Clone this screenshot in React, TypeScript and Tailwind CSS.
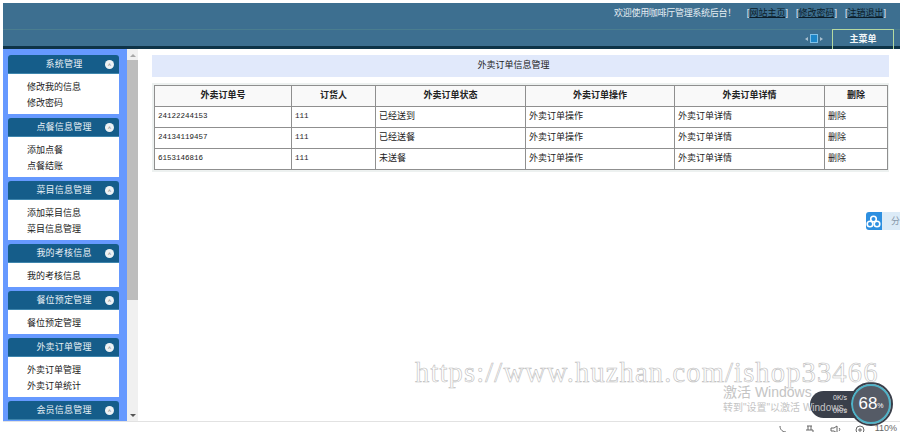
const menus = [
  { title: "系统管理", items: ["修改我的信息", "修改密码"] },
  { title: "点餐信息管理", items: ["添加点餐", "点餐结账"] },
  { title: "菜目信息管理", items: ["添加菜目信息", "菜目信息管理"] },
  { title: "我的考核信息", items: ["我的考核信息"] },
  { title: "餐位预定管理", items: ["餐位预定管理"] },
  { title: "外卖订单管理", items: ["外卖订单管理", "外卖订单统计"] },
  { title: "会员信息管理", items: [] as string[] },
];

const orders = [
  { no: "24122244153", user: "111", status: "已经送到" },
  { no: "24134119457", user: "111", status: "已经送餐" },
  { no: "6153146816", user: "111", status: "未送餐" },
];

const heads = ["外卖订单号", "订货人", "外卖订单状态", "外卖订单操作", "外卖订单详情", "删除"];
const widths = ["w-[137px]", "w-[84px]", "w-[150px]", "w-[149px]", "w-[150px]", "w-[63px]"];

const MenuGroup = ({ title, items }: { title: string; items: string[] }) => (
  <div className="mb-[4px]">
    <div className="flex h-[19px] items-center rounded-t-[3px] border-b border-[#3f86ad] bg-[#155d8a] pt-[1px] text-[9px] text-[#e8f0f5]">
      <span className="w-[90px] pl-[22px] text-center tracking-[0.2px] whitespace-nowrap">{title}</span>
      <span className="ml-[7px] flex h-[9px] w-[9px] items-center justify-center rounded-full bg-[#eef2f4] text-[6px] leading-none text-[#777]">
        ˄
      </span>
    </div>
    {items.length > 0 && (
      <div className="flex flex-col gap-[2px] bg-white pt-[6px] pb-[4px] pl-[19px] text-[9px] leading-[14px] text-[#222]">
        {items.map((item) => (
          <span key={item}>{item}</span>
        ))}
      </div>
    )}
  </div>
);

export default function App() {
  return (
    <div
      className="relative h-[432px] w-[900px] overflow-hidden bg-white pt-[3px] pl-[3px]"
      style={{ fontFamily: '"Liberation Sans", "Noto Sans CJK SC", sans-serif' }}
    >
      {/* top bar */}
      <div className="h-[46px] border-b-[3px] border-[#0e3347] bg-[#3d6f90]">
        <div className="flex h-[27px] items-center justify-end gap-[8px] border-b border-[#4a7d8f] pr-[14px] pb-[5px] text-[9px] text-[#e6eef3]">
          <span className="mr-[3px] tracking-[-0.3px]">欢迎使用咖啡厅管理系统后台！</span>
          <span>
            [<span className="text-[#0b1c28] underline">网站主页</span>]
          </span>
          <span>
            [<span className="text-[#0b1c28] underline">修改密码</span>]
          </span>
          <span>
            [<span className="text-[#0b1c28] underline">注销退出</span>]
          </span>
        </div>
        <div className="flex h-[16px] items-stretch justify-end pr-[6px]">
          <div className="mr-[9px] flex items-center gap-[2px] pt-[1px]">
            <span className="h-0 w-0 border-y-[2px] border-r-[3px] border-y-transparent border-r-[#a9c0cf]" />
            <span className="h-[9px] w-[8px] border border-[#7fc0e8] bg-[#1d86c8]" />
            <span className="h-0 w-0 border-y-[2px] border-l-[3px] border-y-transparent border-l-[#a9c0cf]" />
          </div>
          <div className="-mt-[1px] flex h-[20px] w-[62px] items-center justify-center border-x border-t border-[#b5d9a0] text-[9px] font-bold text-[#f2f6f8]">
            主菜单
          </div>
        </div>
      </div>

      <div className="flex h-[372px]">
        {/* side menu */}
        <div className="h-full w-[124px] overflow-hidden bg-[#6699ff] pt-[6px] pr-[8px] pl-[5px]">
          {menus.map((m) => (
            <MenuGroup key={m.title} title={m.title} items={m.items} />
          ))}
        </div>

        {/* scrollbar */}
        <div className="flex h-full w-[11px] flex-col items-center bg-[#f0f0f0]">
          <div className="mt-[5px] h-0 w-0 border-x-[3px] border-b-[3px] border-x-transparent border-b-[#a8a8a8]" />
          <div className="mt-[3px] h-[240px] w-full bg-[#bdbdbd]" />
          <div className="mt-auto mb-[4px] h-0 w-0 border-x-[3px] border-t-[3px] border-x-transparent border-t-[#555]" />
        </div>

        {/* content */}
        <div className="flex-1 pt-[6px] pl-[14px]">
          <div className="flex h-[22px] w-[737px] items-center justify-center bg-[#e1e9fb] pr-[14px] text-[9px] text-[#222]">
            外卖订单信息管理
          </div>
          <div className="mt-[6px] w-[737px] bg-[#edf1f0] p-[2px]">
            <table className="w-[733px] table-fixed border-collapse bg-white text-[9px] text-[#222]">
              <thead>
                <tr className="h-[21px] bg-[#f9f9f9]">
                  {heads.map((h, i) => (
                    <th key={h} className={`${widths[i]} border border-[#8f8f8f] text-center text-[9px] font-bold`}>
                      {h}
                    </th>
                  ))}
                </tr>
              </thead>
              <tbody>
                {orders.map((o) => (
                  <tr key={o.no} className="h-[21px]">
                    <td className="border border-[#8f8f8f] pl-[3px] font-['Liberation_Mono'] text-[7.5px]">{o.no}</td>
                    <td className="border border-[#8f8f8f] pl-[3px] font-['Liberation_Mono'] text-[7.5px]">{o.user}</td>
                    <td className="border border-[#8f8f8f] pl-[3px]">{o.status}</td>
                    <td className="border border-[#8f8f8f] pl-[3px]">外卖订单操作</td>
                    <td className="border border-[#8f8f8f] pl-[3px]">外卖订单详情</td>
                    <td className="border border-[#8f8f8f] pl-[3px]">删除</td>
                  </tr>
                ))}
              </tbody>
            </table>
          </div>
        </div>
      </div>

      {/* status bar */}
      <div className="flex h-[11px] items-start justify-end border-t border-[#e2e2e2] pr-[3px] text-[#666]">
        <svg width="9" height="9" viewBox="0 0 9 9" fill="none" stroke="#666" className="mt-[3px] mr-[18px]">
          <path d="M2 1c0 4 3 6 6 6" />
        </svg>
        <svg width="9" height="9" viewBox="0 0 9 9" fill="none" stroke="#666" className="mt-[3px] mr-[16px]">
          <path d="M2 1h5M3 1v4M6 1v4M1 5h7v3" />
        </svg>
        <svg width="12" height="9" viewBox="0 0 12 9" fill="none" stroke="#666" className="mt-[3px] mr-[13px]">
          <path d="M1 3h3l3-2v7L4 6H1zM9 3c1 1 1 2 0 3" />
        </svg>
        <svg width="10" height="9" viewBox="0 0 10 9" fill="none" stroke="#666" className="mt-[3px] mr-[10px]">
          <circle cx="5" cy="5" r="4" />
          <path d="M3 5h4M5 3v4" />
        </svg>
        <span className="text-[9px] leading-[12px]">110%</span>
      </div>

      {/* share tab */}
      <div className="absolute top-[212px] left-[866px] flex h-[18px] w-[34px] overflow-hidden rounded-l-[3px]">
        <div className="flex w-[20px] items-center justify-center bg-[#2d8fe0]">
          <svg width="15" height="13" viewBox="0 0 15 13" fill="none" stroke="white" strokeWidth="1.6">
            <circle cx="7.5" cy="4" r="2.8" />
            <circle cx="4" cy="9" r="2.8" />
            <circle cx="11" cy="9" r="2.8" />
          </svg>
        </div>
        <div className="flex-1 bg-[#dcebf7] pl-[9px] text-[9px] leading-[18px] whitespace-nowrap text-[#89a]">分</div>
      </div>

      {/* network meter */}
      <div className="absolute top-[391px] left-[810px] h-[27px] w-[60px] rounded-full bg-[#3a3f4a] pr-[23px] text-right text-[7px] leading-[13px] text-[#e0e0e0]">
        <div>0K/s</div>
        <div>0K/s</div>
      </div>
      <div className="absolute top-[384px] left-[851px] flex h-[40px] w-[40px] items-center justify-center rounded-full border-2 border-[#4fb3c8] bg-[#555b66] text-[17px] font-light text-white outline-2 outline-[#3a3f4a]">
        68<span className="mt-[4px] text-[7px]">%</span>
      </div>

      {/* watermark */}
      <div className="pointer-events-none absolute top-[355px] left-[415px] font-['Liberation_Serif'] text-[28.5px] leading-[36px] tracking-[1.15px] whitespace-nowrap text-transparent [-webkit-text-stroke:0.6px_#bdbdbd]">
        https://www.huzhan.com/ishop33466
      </div>
      <div className="pointer-events-none absolute top-[383px] left-[723px] text-[#c4c4c4]">
        <div className="text-[14px] leading-[18px]">激活 Windows</div>
        <div className="text-[10px] leading-[14px]">转到"设置"以激活 Windows。</div>
      </div>
    </div>
  );
}
